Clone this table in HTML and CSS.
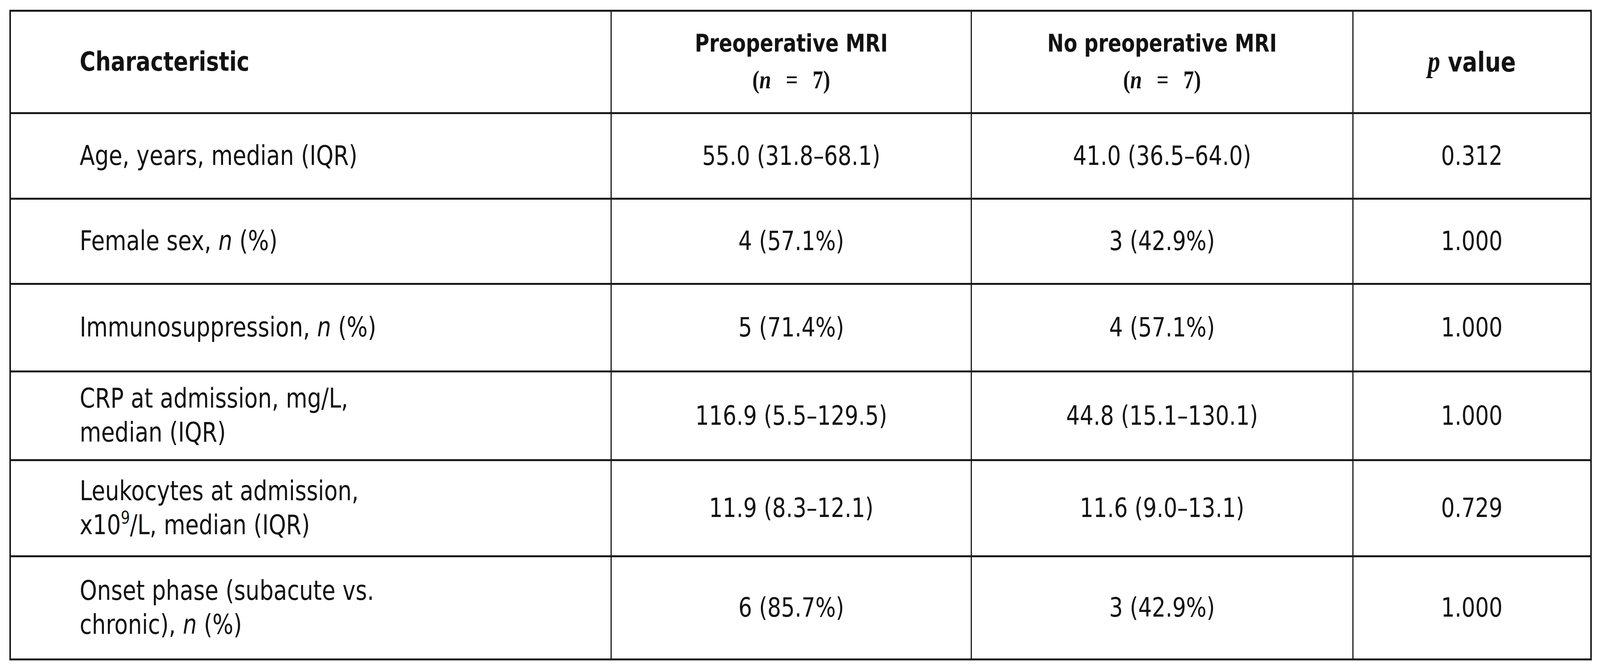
FILE: index.html
```html
<!DOCTYPE html>
<html lang="en">
<head>
<meta charset="utf-8">
<title>Baseline characteristics</title>
<link rel="stylesheet" href="styles.css">
</head>
<body>
<div class="page">
  <table class="stats">
    <colgroup>
      <col class="c-char">
      <col class="c-pre">
      <col class="c-nopre">
      <col class="c-p">
    </colgroup>
    <thead>
      <tr class="r-head">
        <th class="lbl"><span class="tx">Characteristic</span></th>
        <th class="grp"><span class="tx">Preoperative MRI<br><span class="math">(<i>n</i><span class="eq">=</span>7)</span></span></th>
        <th class="grp"><span class="tx">No preoperative MRI<br><span class="math">(<i>n</i><span class="eq">=</span>7)</span></span></th>
        <th class="pv"><span class="tx"><i class="pm">p</i> value</span></th>
      </tr>
    </thead>
    <tbody>
      <tr class="r1">
        <td class="lbl"><span class="tx">Age, years, median (IQR)</span></td>
        <td><span class="tx">55.0 (31.8–68.1)</span></td>
        <td><span class="tx">41.0 (36.5–64.0)</span></td>
        <td><span class="tx">0.312</span></td>
      </tr>
      <tr class="r2">
        <td class="lbl"><span class="tx">Female sex, <i>n</i> (%)</span></td>
        <td><span class="tx">4 (57.1%)</span></td>
        <td><span class="tx">3 (42.9%)</span></td>
        <td><span class="tx">1.000</span></td>
      </tr>
      <tr class="r3">
        <td class="lbl"><span class="tx">Immunosuppression, <i>n</i> (%)</span></td>
        <td><span class="tx">5 (71.4%)</span></td>
        <td><span class="tx">4 (57.1%)</span></td>
        <td><span class="tx">1.000</span></td>
      </tr>
      <tr class="r4">
        <td class="lbl"><span class="tx">CRP at admission, mg/L,<br>median (IQR)</span></td>
        <td><span class="tx">116.9 (5.5–129.5)</span></td>
        <td><span class="tx">44.8 (15.1–130.1)</span></td>
        <td><span class="tx">1.000</span></td>
      </tr>
      <tr class="r5">
        <td class="lbl"><span class="tx">Leukocytes at admission,<br>x10<sup>9</sup>/L, median (IQR)</span></td>
        <td><span class="tx">11.9 (8.3–12.1)</span></td>
        <td><span class="tx">11.6 (9.0–13.1)</span></td>
        <td><span class="tx">0.729</span></td>
      </tr>
      <tr class="r6">
        <td class="lbl"><span class="tx">Onset phase (subacute vs.<br>chronic), <i>n</i> (%)</span></td>
        <td><span class="tx">6 (85.7%)</span></td>
        <td><span class="tx">3 (42.9%)</span></td>
        <td><span class="tx">1.000</span></td>
      </tr>
    </tbody>
  </table>
</div>
</body>
</html>
```
FILE: styles.css
```css
html, body {
  margin: 0;
  padding: 0;
  background: #ffffff;
  overflow: hidden;
}

.page {
  padding: 1.46vh 0 0 0.593vw;
}

.stats {
  border-collapse: collapse;
  table-layout: fixed;
  width: 98.836vw;
  font-family: "DejaVu Sans", Verdana, sans-serif;
  font-size: 1.3464vw;
  line-height: 4.12vh;
  color: #121212;
  border-left: 4px solid #1a1a1a;
  border-right: 4px solid #1a1a1a;
}

.c-char { width: 37.563vw; }
.c-pre { width: 22.501vw; }
.c-nopre { width: 23.848vw; }
.c-p { width: 14.879vw; }

.stats th,
.stats td {
  border-top: 5px solid #1a1a1a;
  border-bottom: 5px solid #1a1a1a;
  border-left: 3px solid #1a1a1a;
  border-right: 3px solid #1a1a1a;
  text-align: center;
  vertical-align: middle;
  padding: 0;
}

.tx {
  display: inline-block;
  transform: scaleY(1.22);
  transform-origin: center;
}

.stats th {
  font-weight: bold;
  line-height: 4.45vh;
}

.stats th.grp {
  font-size: 1.2323vw;
}

.stats th.pv {
  font-size: 1.39vw;
}

.stats .lbl {
  text-align: left;
  padding-left: 4.29vw;
}

.stats td.lbl {
  font-size: 1.38vw;
}

.r-head { height: 15.304vh; }
.r1 { height: 12.792vh; }
.r2 { height: 12.734vh; }
.r3 { height: 13.084vh; }
.r4 { height: 13.259vh; }
.r5 { height: 14.369vh; }
.r6 { height: 15.421vh; }

.stats i {
  font-style: italic;
}

.math {
  font-family: "Liberation Serif", "DejaVu Serif", serif;
  font-weight: bold;
  font-size: 1.32vw;
}

.math i {
  font-style: italic;
}

.eq {
  display: inline-block;
  padding: 0 0.92vw;
}

.pm {
  font-family: "Liberation Serif", "DejaVu Serif", serif;
  font-weight: bold;
  font-size: 1.55vw;
}

sup {
  font-size: 0.9vw;
  line-height: 0;
  vertical-align: 0.55vw;
}
```
